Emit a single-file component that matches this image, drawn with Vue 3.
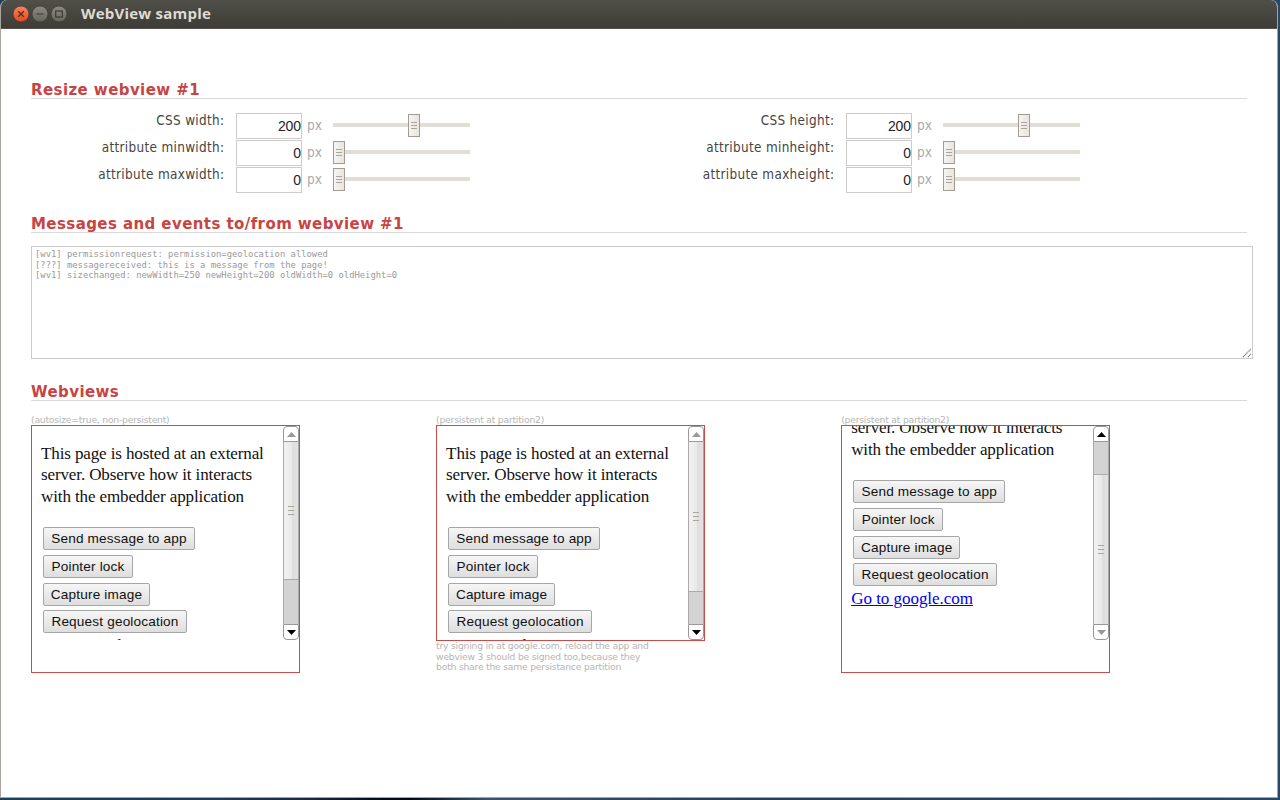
<script setup>
const groups = [
  [
    { label: 'CSS width:', value: 200, pos: 75 },
    { label: 'attribute minwidth:', value: 0, pos: 0 },
    { label: 'attribute maxwidth:', value: 0, pos: 0 },
  ],
  [
    { label: 'CSS height:', value: 200, pos: 75 },
    { label: 'attribute minheight:', value: 0, pos: 0 },
    { label: 'attribute maxheight:', value: 0, pos: 0 },
  ],
]
const buttons = [
  { text: 'Send message to app', width: 152 },
  { text: 'Pointer lock', width: 90 },
  { text: 'Capture image', width: 107 },
  { text: 'Request geolocation', width: 144 },
]
const views = [
  { caption: '(autosize=true, non-persistent)', tall: true, scroll: 0, thumb: 138, before: 0 },
  {
    caption: '(persistent at partition2)', tall: false, scroll: 0, thumb: 150, before: 0,
    note: ['try signing in at google.com, reload the app and', 'webview 3 should be signed too,because they', 'both share the same persistance partition'],
  },
  { caption: '(persistent at partition2)', tall: true, scroll: 47, thumb: 150, before: 32 },
]
</script>

<template>
  <div class="desktop">
    <div class="window">
      <header class="titlebar">
        <svg class="controls" width="56" height="18" viewBox="0 0 56 18">
          <defs>
            <linearGradient id="orange" x1="0" y1="0" x2="0" y2="1"><stop offset="0" stop-color="#f58561" /><stop offset="1" stop-color="#e3481b" /></linearGradient>
            <linearGradient id="grey" x1="0" y1="0" x2="0" y2="1"><stop offset="0" stop-color="#8c8a82" /><stop offset="1" stop-color="#65645e" /></linearGradient>
          </defs>
          <circle cx="9" cy="9" r="8" fill="url(#orange)" stroke="#393833" stroke-width=".7" />
          <path d="M6.2 6.2l5.6 5.6M11.8 6.2l-5.6 5.6" stroke="#5d2a18" stroke-width="1.3" />
          <circle cx="28" cy="9" r="8" fill="url(#grey)" stroke="#393833" stroke-width=".7" />
          <path d="M24.2 9h7.6" stroke="#3c3b37" stroke-width="1.2" />
          <circle cx="47" cy="9" r="8" fill="url(#grey)" stroke="#393833" stroke-width=".7" />
          <rect x="43.7" y="6" width="6.6" height="6" fill="none" stroke="#3c3b37" stroke-width="1.2" />
        </svg>
        <span class="title">WebView sample</span>
      </header>
      <main>
        <h2 class="h-resize"><span>Resize webview #1</span></h2>
        <div class="groups">
          <div v-for="(g, i) in groups" :key="i" class="group">
            <div v-for="r in g" :key="r.label" class="row">
              <label>{{ r.label }}</label>
              <div class="field">{{ r.value }}</div>
              <span class="px">px</span>
              <div class="slider"><i class="thumb" :style="{ marginLeft: r.pos + 'px' }"><b /><b /><b /></i></div>
            </div>
          </div>
        </div>
        <h2 class="h-messages"><span>Messages and events to/from webview #1</span></h2>
        <div class="log">
          <p>[wv1] permissionrequest: permission=geolocation allowed</p>
          <p>[???] messagereceived: this is a message from the page!</p>
          <p>[wv1] sizechanged: newWidth=250 newHeight=200 oldWidth=0 oldHeight=0</p>
          <svg class="grip" width="10" height="10" viewBox="0 0 10 10"><path d="M1 9L9 1M6 9l3-3" stroke="#777" stroke-width="1.1" stroke-dasharray="1.2 .4" /></svg>
        </div>
        <h2 class="h-views"><span>Webviews</span></h2>
        <div class="views">
          <section v-for="(v, i) in views" :key="i">
            <div class="caption"><span>{{ v.caption }}</span></div>
            <div class="frame" :class="{ tall: v.tall }">
              <div class="page">
                <div class="content" :style="{ marginTop: -v.scroll + 'px' }">
                  <p class="l1">This page is hosted at an external</p>
                  <p class="l2">server. Observe how it interacts</p>
                  <p class="l3">with the embedder application</p>
                  <div class="buttons">
                    <button v-for="b in buttons" :key="b.text" :style="{ width: b.width + 'px' }">{{ b.text }}</button>
                  </div>
                  <a>Go to google.com</a>
                </div>
              </div>
              <div class="bar">
                <div class="arrow up"><svg width="9" height="5" viewBox="0 0 9 5"><path d="M0 5L4.5 0 9 5z" :fill="v.scroll ? '#000' : '#999'" /></svg></div>
                <div class="track">
                  <div class="knob" :class="{ below: v.before }" :style="{ marginTop: v.before + 'px', height: v.thumb + 'px' }"><b /><b /><b /></div>
                </div>
                <div class="arrow down"><svg width="9" height="5" viewBox="0 0 9 5"><path d="M0 0L4.5 5 9 0z" :fill="v.scroll ? '#999' : '#000'" /></svg></div>
              </div>
            </div>
            <div v-if="v.note" class="note"><p v-for="n in v.note" :key="n">{{ n }}</p></div>
          </section>
        </div>
      </main>
    </div>
  </div>
</template>

<style>
body { background: #1d3651; overflow: hidden; }
</style>
<style scoped>
* { box-sizing: border-box; }
p, h2 { margin: 0; white-space: nowrap; }
.desktop { width: 1280px; height: 800px; padding-right: 2px; background: linear-gradient(90deg, #1f3f5d 0, #1d3b58 17%, #1b2845 24%, #05091b 30%, #030817 32%, #36536f 38%, #233f5b 60%, #294866 100%); font-family: "DejaVu Sans", sans-serif; }
.window { width: 1278px; height: 798px; border: 1px solid #aaa49d; border-top: 0; border-radius: 7px 7px 0 0; background: #fff; overflow: hidden; }
.titlebar { margin: 0 -1px; height: 29px; display: flex; align-items: center; padding-left: 12px; background: linear-gradient(#504f48, #3d3c37); border-bottom: 1px solid #55534c; }
.title { margin: -2px 0 0 13px; font: 700 15px/20px "Open Sans", sans-serif; letter-spacing: .22px; color: #dfdbd2; }
main { padding: 51px 30px 0; }
h2 { width: 1216px; height: 19px; border-bottom: 1px solid #d9d9d9; font-size: 15px; line-height: 20px; font-weight: 700; letter-spacing: .42px; color: #c84443; }
.groups { display: flex; padding-top: 14px; height: 115px; }
.group { flex: none; width: 610px; }
.row { display: flex; height: 26.75px; }
label { width: 193.4px; text-align: right; font: 13.4px/16px "DejaVu Sans Condensed", "DejaVu Sans", sans-serif; letter-spacing: .33px; color: #444; white-space: nowrap; }
.field { width: 66px; height: 26px; margin-left: 11.6px; border: 1px solid #ccc; text-align: right; font: 14px/25px "Liberation Sans", sans-serif; letter-spacing: -.1px; color: #222; }
.px { width: 31px; padding-left: 5px; font: 13.6px/24px "DejaVu Sans Condensed", "DejaVu Sans", sans-serif; color: #aaa; }
.slider { width: 137px; height: 4px; margin-top: 10px; background: #e2ddd7; }
.thumb { display: flex; flex-direction: column; gap: 2px; align-items: center; justify-content: center; width: 12px; height: 23px; position: relative; top: -9px; border: 1px solid #a39a90; background: linear-gradient(90deg, #f6f4f2, #e8e4df); }
.thumb b, .knob b { width: 6px; height: 1px; background: #aaa59e; }
.log { position: relative; width: 1222px; height: 113px; margin-top: 13px; padding: 2px 3px; border: 1px solid #ccc; color: #999; font: 8.86px/10.7px "DejaVu Sans Mono", monospace; }
.grip { position: absolute; right: 0; bottom: 0; }
.h-views { margin-top: 23px; }
.views { display: flex; padding-top: 13px; }
section { flex: none; width: 405.1px; }
.caption { height: 11px; font-size: 9.2px; line-height: 11px; letter-spacing: -.2px; color: #b5b5b5; white-space: nowrap; }
.frame { display: flex; width: 269px; height: 216px; border: 1px solid #ca4b4b; }
.frame.tall { height: 248px; }
.page { width: 251px; height: 214px; overflow: hidden; }
.content { padding: 17px 0 0 9px; font: 17.07px/21.4px "Liberation Serif", serif; letter-spacing: -.14px; color: #111; height: 261px; display: flow-root; }
.content p { height: 21.4px; }
.buttons { padding: 20px 0 0 2px; display: flex; flex-direction: column; gap: 4.75px; }
button { flex: none; height: 23px; padding: 0; border: 1px solid #a6a6a6; border-radius: 2px; background: linear-gradient(#f6f6f6, #dedede); font: 13.6px/21px "Liberation Sans", sans-serif; letter-spacing: .17px; color: #111; white-space: nowrap; }
a { display: block; width: max-content; height: 21px; margin-top: 2px; letter-spacing: -.06px; color: #00e; text-decoration: underline; }
.bar { width: 16px; height: 214px; display: flex; flex-direction: column; }
.arrow { flex: none; height: 16px; display: flex; align-items: center; justify-content: center; border: 1px solid #999; background: #fff; }
.up { border-radius: 4px 4px 0 0; }
.down { border-radius: 0 0 4px 4px; }
.track { height: 182px; background: #d3d3d3; border: solid #aaa; border-width: 0 1px; display: flow-root; overflow: hidden; }
.knob { display: flex; flex-direction: column; gap: 3px; align-items: center; justify-content: center; border-bottom: 1px solid #aaa; background: linear-gradient(90deg, #f2f2f2, #e9e9e9 55%, #dedede 56%, #e2e2e2); }
.knob.below { border-top: 1px solid #aaa; border-bottom: 0; }
.note { color: #b5b5b5; font-size: 9.2px; line-height: 10.7px; letter-spacing: -.2px; }
</style>
